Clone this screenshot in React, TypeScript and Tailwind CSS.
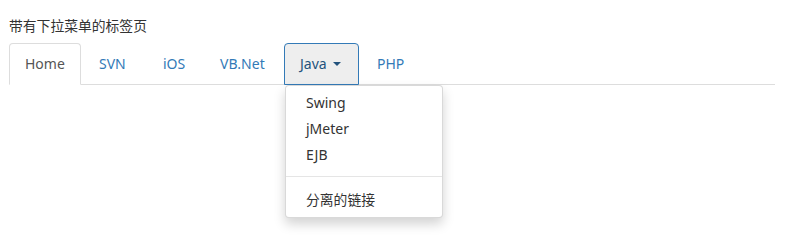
import React from "react";

const font = { fontFamily: '"Noto Sans", "Noto Sans CJK SC", sans-serif' };

export default function App() {
  const tabs = [
    { label: "SVN", w: "w-[62px]" },
    { label: "iOS", w: "w-[55px]" },
    { label: "VB.Net", w: "w-[78px]" },
  ];
  return (
    <div className="bg-white w-[787px] h-[244px] pl-[9px] pt-[15px] text-[14px] leading-[20px] text-[#333]" style={font}>
      <p className="mb-[8px] font-['Noto_Sans_CJK_SC',sans-serif] text-[13.8px]">带有下拉菜单的标签页</p>
      <ul className="flex w-[766px] border-b border-[#ddd]">
        <li className="mr-[2px] -mb-px">
          <a className="block w-[72px] py-[10px] px-[15px] border border-[#ddd] border-b-transparent rounded-t-[4px] bg-white text-[#555]">Home</a>
        </li>
        {tabs.map((t) => (
          <li key={t.label} className="mr-[2px] -mb-px">
            <a className={`block ${t.w} py-[10px] px-[15px] border border-transparent text-[#337ab7]`}>{t.label}</a>
          </li>
        ))}
        <li className="relative mr-[2px] -mb-px">
          <a className="flex items-center w-[75px] py-[10px] px-[15px] border border-[#337ab7] rounded-t-[4px] bg-[#eee] text-[#23527c]">
            Java
            <span className="ml-[6px] w-0 h-0 border-t-[4px] border-t-[#23527c] border-x-[4px] border-x-transparent" />
          </a>
          <ul className="absolute left-[1px] top-full z-10 w-[158px] py-[5px] bg-white border border-black/15 rounded-[4px] shadow-[0_6px_12px_rgba(0,0,0,0.175)] text-[#333]">
            <li className="px-[20px] py-[3px] -mt-px">Swing</li>
            <li className="px-[20px] py-[3px]">jMeter</li>
            <li className="px-[20px] py-[3px]">EJB</li>
            <li className="mt-[8px] mb-[9px] h-px bg-[#e5e5e5]" />
            <li className="px-[20px] py-[3px] font-['Noto_Sans_CJK_SC',sans-serif] text-[13.8px]">分离的链接</li>
          </ul>
        </li>
        <li className="mr-[2px] -mb-px">
          <a className="block py-[10px] px-[15px] border border-transparent text-[#337ab7]">PHP</a>
        </li>
      </ul>
    </div>
  );
}
